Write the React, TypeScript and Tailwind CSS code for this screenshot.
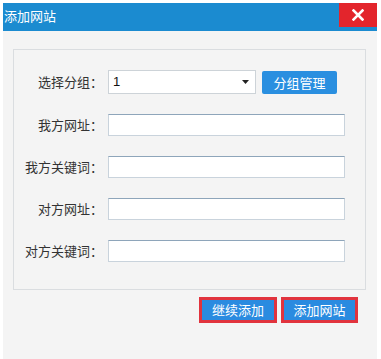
import { ChevronDown } from "lucide-react";

const font = { fontFamily: '"Microsoft YaHei", "Noto Sans CJK SC", "Liberation Sans", sans-serif' };

const rows = ["我方网址：", "我方关键词：", "对方网址：", "对方关键词："];

export default function App() {
  return (
    <div className="w-[381px] h-[359px] bg-white pl-[3px] pt-[3px] overflow-hidden" style={font}>
      <div className="w-[374px] h-[356px] flex flex-col bg-[#f4f4f4]">
        {/* Title bar */}
        <div className="h-[28px] bg-[#1b8bd0] flex items-start justify-between">
          <span className="text-white text-[13px] leading-[26px] pl-[1px]">添加网站</span>
          <button className="w-[38px] h-[24px] bg-[#e3252c] flex items-center justify-center">
            <svg width="12" height="12" viewBox="0 0 12 12">
              <path d="M1.5 1.5 L10.5 10.5 M10.5 1.5 L1.5 10.5" stroke="white" strokeWidth="2.6" strokeLinecap="square" />
            </svg>
          </button>
        </div>

        {/* Form panel */}
        <div className="ml-[10px] mt-[18px] w-[353px] h-[241px] border border-[#dadde0] pt-[20px] flex flex-col gap-5">
          <div className="flex items-center h-[24px]">
            <label className="w-[89px] text-right text-[13px] text-[#333]">选择分组：</label>
            <div className="ml-[5px] w-[148px] h-[24px] bg-white border border-[#cdd3d8] flex items-center justify-between pl-[4px] pr-[6px]">
              <span className="text-[13px] text-[#111]" style={{ fontFamily: '"Liberation Sans", sans-serif' }}>1</span>
              <svg width="7" height="4" viewBox="0 0 7 4">
                <path d="M0 0 H7 L3.5 4 Z" fill="#222" />
              </svg>
            </div>
            <button className="ml-[6px] w-[75px] h-[23px] bg-[#2a8fe0] rounded-[2px] text-white text-[13px] leading-[23px]">
              分组管理
            </button>
          </div>
          {rows.map((label) => (
            <div key={label} className="flex items-center h-[22px]">
              <label className="w-[89px] text-right text-[13px] text-[#333]">{label}</label>
              <input
                className="ml-[5px] w-[237px] h-[22px] bg-white border border-[#c9d3dc] border-t-[#8ea5ba] outline-none"
              />
            </div>
          ))}
        </div>

        {/* Footer buttons */}
        <div className="mt-[7px] flex justify-end gap-[4px] pr-[19px]">
          <button className="w-[78px] h-[26px] border-[3px] border-[#e1333d] bg-[#2a8be0] text-white text-[13px] leading-[20px]">
            继续添加
          </button>
          <button className="w-[77px] h-[26px] border-[3px] border-[#e1333d] bg-[#2a8be0] text-white text-[13px] leading-[20px]">
            添加网站
          </button>
        </div>
      </div>
    </div>
  );
}
